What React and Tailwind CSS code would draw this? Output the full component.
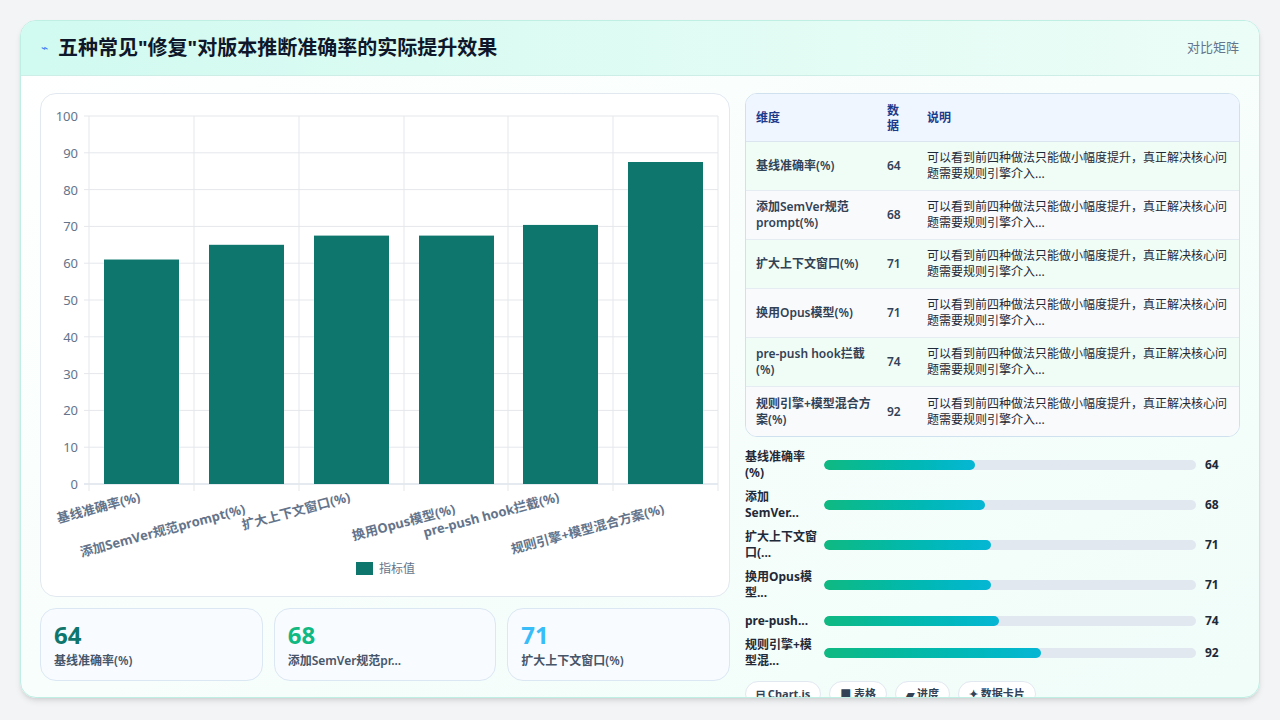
import React from 'react';

const rows = [
  { name: '基线准确率(%)', short: '基线准确率(%)', v: 64, h: 61 },
  { name: '添加SemVer规范prompt(%)', short: '添加SemVer...', v: 68, h: 65 },
  { name: '扩大上下文窗口(%)', short: '扩大上下文窗口(...', v: 71, h: 67.5 },
  { name: '换用Opus模型(%)', short: '换用Opus模型...', v: 71, h: 67.5 },
  { name: 'pre-push hook拦截(%)', short: 'pre-push...', v: 74, h: 70.4 },
  { name: '规则引擎+模型混合方案(%)', short: '规则引擎+模型混...', v: 92, h: 87.5 },
];
const desc = '可以看到前四种做法只能做小幅度提升，真正解决核心问题需要规则引擎介入...';
const font = { fontFamily: '"Noto Sans", "Noto Sans CJK SC", sans-serif' };

function Chart() {
  const y0 = 483, k = 3.68;
  const xs = [88, 193, 298, 403, 507, 612, 717];
  return (
    <svg width="690" height="503" viewBox="40 93 690 503" className="block">
      {[0,10,20,30,40,50,60,70,80,90,100].map(t => (
        <g key={t}>
          <line x1="83" x2="717" y1={y0 - t * k} y2={y0 - t * k} stroke={t === 0 ? '#cbd5e1' : '#e5e7eb'} />
          <text x="77" y={y0 - t * k + 5} textAnchor="end" fontSize="13" fill="#64748b">{t}</text>
        </g>
      ))}
      {xs.map(x => <line key={x} x1={x} x2={x} y1="115" y2="490" stroke="#e5e7eb" />)}
      {rows.map((r, i) => (
        <rect key={i} x={xs[i] + 15} y={y0 - r.h * k} width="75" height={r.h * k} fill="#0f766e" />
      ))}
      {rows.map((r, i) => (
        <text key={'l' + i} transform={`translate(${xs[i] + 52} ${i % 2 ? 512 : 500}) rotate(-15)`} textAnchor="end" fontSize="13" fontWeight="700" fill="#64748b">{r.name}</text>
      ))}
      <rect x="355" y="561" width="17" height="13" fill="#0f766e" />
      <text x="378" y="572" fontSize="12" fill="#64748b">指标值</text>
    </svg>
  );
}

export default function App() {
  return (
    <div className="w-[1280px] h-[720px] bg-[#f3f4f6] p-5 overflow-hidden" style={font}>
      <div className="h-[678px] rounded-2xl border border-[#bfeee3] bg-gradient-to-br from-white to-[#f0fdf9] overflow-hidden shadow-md">
        <div className="h-[55px] flex items-center justify-between px-5 bg-gradient-to-r from-[#d1faf0] to-[#ecfdf7] border-b border-[#cdeee6]">
          <div className="flex items-center gap-[10px]">
            <span className="text-[#3b82f6] text-xs">⌁</span>
            <h1 className="text-[20px] font-bold text-[#0f172a]">五种常见"修复"对版本推断准确率的实际提升效果</h1>
          </div>
          <span className="text-[13px] text-[#64748b]">对比矩阵</span>
        </div>
        <div className="flex gap-[15px] px-[19px] pt-[17px]">
          <div className="w-[690px] flex flex-col gap-[11px]">
            <div className="h-[504px] bg-white rounded-2xl border border-[#e2e8f0] overflow-hidden"><Chart /></div>
            <div className="grid grid-cols-3 gap-[11px]">
              {[['#0f766e', 0], ['#10b981', 1], ['#38bdf8', 2]].map(([c, i]) => (
                <div key={i} className="h-[73px] rounded-2xl border border-[#dbe7f3] bg-[#f8fbff] px-[13px] pt-[12px]">
                  <div className="text-[24px] font-bold leading-[28px]" style={{ color: c }}>{rows[i].v}</div>
                  <div className="text-[12px] font-semibold text-[#475569] mt-[3px]">{i === 1 ? '添加SemVer规范pr...' : rows[i].name}</div>
                </div>
              ))}
            </div>
          </div>
          <div className="w-[496px]">
            <div className="rounded-xl border border-[#cfe0ee] overflow-hidden bg-white">
              <div className="h-[48px] flex items-center bg-[#eff6ff] text-[12px] font-bold text-[#1e3a8a] border-b border-[#dbe5ef]">
                <div className="w-[141px] pl-[10px]">维度</div>
                <div className="w-[40px] leading-[15px]">数<br />据</div>
                <div>说明</div>
              </div>
              {rows.map((r, i) => (
                <div key={i} className={`h-[49px] flex items-center text-[12px] border-b border-[#e5edf3] last:border-b-0 ${i % 2 ? 'bg-[#f8fafc]' : 'bg-[#f0fdf6]'}`}>
                  <div className="w-[141px] pl-[10px] pr-2 font-semibold text-[#334155] leading-[16px]">{r.name}</div>
                  <div className="w-[40px] font-semibold text-[#334155]">{r.v}</div>
                  <div className="flex-1 pr-3 text-[#1f2937] leading-[16px]">{desc}</div>
                </div>
              ))}
            </div>
            <div className="mt-[8px] flex flex-col">
              {rows.map((r, i) => (
                <div key={i} className={`flex items-center ${i >= 4 ? 'h-[32px]' : 'h-[40px]'}`}>
                  <div className="w-[79px] text-[12px] font-bold text-[#1f2937] leading-[16px] pr-1">{r.short}</div>
                  <div className="w-[372px] h-[10px] rounded-full bg-[#e2e8f0] overflow-hidden">
                    <div className="h-full rounded-full bg-gradient-to-r from-[#10b981] to-[#06b6d4]" style={{ width: `${r.h / 1.5}%` }} />
                  </div>
                  <div className="ml-[9px] text-[12px] font-bold text-[#1f2937]">{r.v}</div>
                </div>
              ))}
            </div>
            <div className="mt-[12px] flex gap-[8px]">
              {['⊟ Chart.js', '■ 表格', '▰ 进度', '✦ 数据卡片'].map(t => (
                <span key={t} className="h-[26px] px-[10px] rounded-full border border-[#e2e8f0] bg-white text-[11px] font-bold text-[#334155] flex items-center">{t}</span>
              ))}
            </div>
          </div>
        </div>
      </div>
    </div>
  );
}
